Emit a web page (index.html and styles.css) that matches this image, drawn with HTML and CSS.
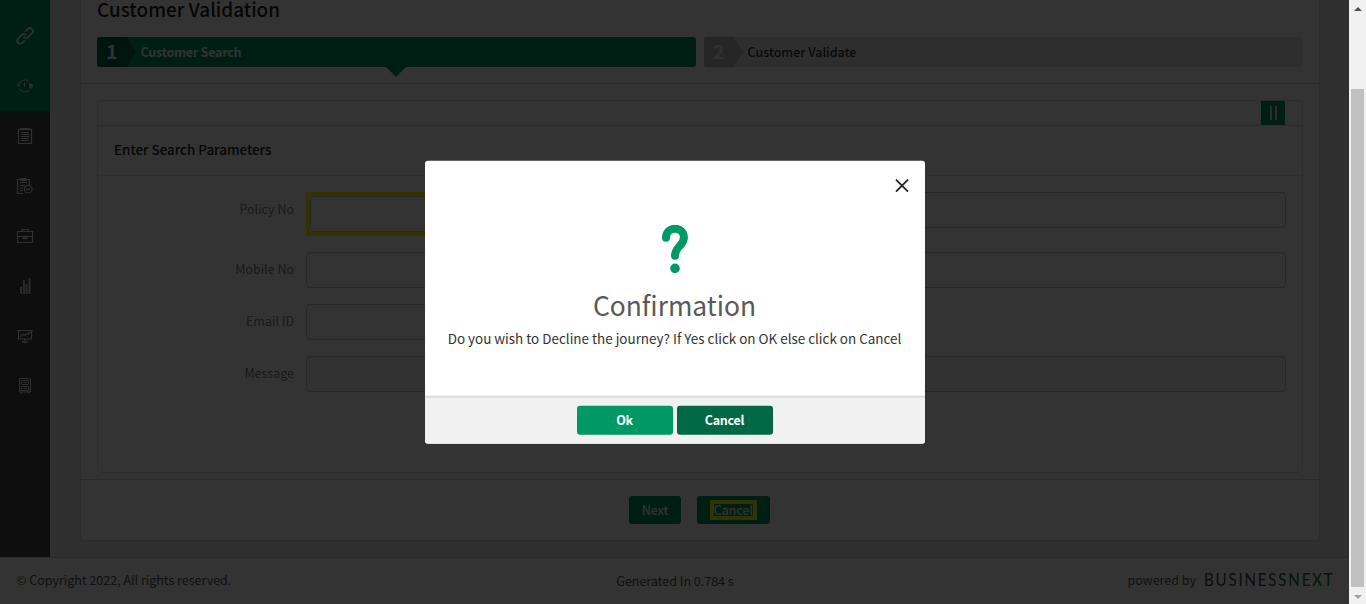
FILE: index.html
```html
<!DOCTYPE html>
<html lang="en">
<head>
<meta charset="utf-8">
<title>Customer Validation</title>
<link rel="stylesheet" href="styles.css">
</head>
<body>
<div class="window">
<div class="page">
  <div class="main">
    <nav class="sidebar">
      <div class="nav-active">
        <a class="nav-item"><svg class="icon" viewBox="0 0 16 16"><g transform="rotate(-45 8 8)" stroke-width="1.800"><path d="M4.500 11H1.200A3 3 0 0 1 1.200 5H6.500A3 3 0 0 1 9.500 8.300"/><path d="M11.500 5h3.300a3 3 0 0 1 0 6H9.500A3 3 0 0 1 6.500 7.700"/></g></svg></a>
        <a class="nav-item"><svg class="icon thin" viewBox="0 0 16 16"><path d="M1.500 7.500A6.300 6.300 0 0 1 12.500 4M2.300 10.500A6.300 6.300 0 0 0 12.500 12M7.500 4.500v4M0 6.500l1.500 1.800L3 6.500"/><path class="solid" d="M12 5.500h3v1h1v3h-1v1h-3z"/></svg></a>
      </div>
      <a class="nav-item"><svg class="icon" viewBox="0 0 16 16"><path d="M1.500 1.500h13v14h-13zM3 .5h10M4 4.500h8M4 6.500h8M4 8.500h8M4 10.500h8M4 12.500h8"/></svg></a>
      <a class="nav-item"><svg class="icon" viewBox="0 0 16 16"><path d="M6.500 15.500h-6v-14h12v5.500M4 .5h5v2H4zM3 4.500h7M3 7.500h5M3 10h3M3 12.500h3"/><circle cx="11.200" cy="11.200" r="3.800"/><path d="M9.500 10.500l1.700 1.700 1.700-2"/></svg></a>
      <a class="nav-item"><svg class="icon" viewBox="0 0 16 16"><path d="M.5 3.500h15v11H.5zM5 3V1.500h6V3M.5 8.500h15"/><path class="solid" d="M5.500 9h5v2h-5z"/></svg></a>
      <a class="nav-item"><svg class="icon" viewBox="0 0 16 16"><path class="solid" d="M3 9h2v7H3zM6 2h2v14H6zM8.700 6h1.800v10H8.700zM11.500 0h2v16h-2z"/></svg></a>
      <a class="nav-item"><svg class="icon" viewBox="0 0 16 16"><path d="M0 2.500h16M1.500 2.500v8.500h13V2.500M3 8.500l3-2 2 1 2-2 1.500.5 2-2M8 11v2M5 14.500l3-2 3 2M7 14.500h2"/></svg></a>
      <a class="nav-item"><svg class="icon thin" viewBox="0 0 16 16"><path d="M2.500.5h11v13.500h-11zM4.500 2.500h7v4h-7zM4.500 8.500h7v4h-7zM6.500 4.500h3M6.500 10.500h3M4.500 14v2M11.500 14v2"/></svg></a>
    </nav>
    <div class="content">
      <section class="card">
        <header class="card-head">
          <h1 class="title">Customer Validation</h1>
          <div class="steps">
            <div class="step step-current"><span class="step-no">1</span><span class="step-label">Customer Search</span></div>
            <div class="step"><span class="step-no">2</span><span class="step-label">Customer Validate</span></div>
          </div>
        </header>
        <div class="panel">
          <div class="toolbar"><button class="pause" aria-label="Pause"><i></i><i></i></button></div>
          <h2 class="panel-title">Enter Search Parameters</h2>
          <div class="form">
            <label class="label">Policy No</label><div class="highlight"><div class="input"></div></div><div class="input second"></div>
            <label class="label">Mobile No</label><div class="input"></div><div class="input second"></div>
            <label class="label">Email ID</label><div class="input"></div><span></span>
            <label class="label">Message</label><div class="input wide"></div>
          </div>
        </div>
        <footer class="actions">
          <button class="action next">Next</button>
          <button class="action"><span class="mark">Cancel</span></button>
        </footer>
      </section>
    </div>
  </div>
  <footer class="footer">
    <span class="copyright">© Copyright 2022, All rights reserved.</span>
    <span class="generated">Generated In 0.784 s</span>
    <span class="powered">powered by <span class="brand">BUSINESS<b>NEXT</b></span></span>
  </footer>
  <div class="overlay">
    <div class="dialog">
      <div class="dialog-body">
        <svg class="close" viewBox="0 0 14 14"><path d="M1 1l12 12M13 1L1 13"/></svg>
        <svg class="question" viewBox="0 0 26 49"><path d="M4 13C4 7.500 8 4 13 4s8.900 3.500 8.900 9c0 8-8.900 9-8.900 18"/><circle cx="13" cy="43.700" r="4.800"/></svg>
        <h3 class="dialog-title">Confirmation</h3>
        <p class="dialog-text">Do you wish to Decline the journey? If Yes click on OK else click on Cancel</p>
      </div>
      <div class="dialog-foot"><button class="btn">Ok</button><button class="btn dark">Cancel</button></div>
    </div>
  </div>
</div>
<div class="scrollbar"><span class="arrow up"></span><span class="thumb"></span><span class="arrow down"></span></div>
</div>
</body>
</html>
```
FILE: styles.css
```css
* { box-sizing: border-box; }
body { margin: 0; font-family: "Noto Sans CJK SC", "Noto Sans", sans-serif; font-size: 12.5px; color: #333; }
button { font: inherit; border: 0; padding: 0; }
.window { display: flex; width: 1366px; height: 604px; overflow: hidden; }
.page { position: relative; width: 1349px; display: flex; flex-direction: column; background: #fff; }
.main { display: flex; height: 557px; background: #ebebeb; }
.sidebar { width: 50px; background: #464646; }
.nav-active { background: #009965; padding-top: 11px; height: 111px; }
.nav-item { display: flex; height: 50px; align-items: center; justify-content: center; }
.icon { width: 16px; height: 16px; fill: none; stroke: #e8e8e8; stroke-width: 1.2; overflow: visible; }
.thin { stroke-width: 1; }
.icon .solid { fill: #d8d8d8; stroke: none; }
.content { flex: 1; padding: 0 29px 16px 30px; }
.card { height: 541px; background: #fff; border: 1px solid #d9d9d9; border-top: 0; border-radius: 0 0 3px 3px; display: flex; flex-direction: column; }
.card-head { height: 84px; padding: 0 16px; border-bottom: 1px solid #d0d0d0; }
.title { margin: 0; height: 37px; line-height: 18px; font-size: 18.9px; font-weight: 500; color: #222; }
.steps { display: grid; grid-template-columns: 1fr 1fr; gap: 8px; }
.step { position: relative; display: flex; height: 30px; line-height: 29px; background: #e5e5e5; border-radius: 3px; color: #333; font-weight: 500; }
.step-no { width: 39px; padding-left: 9px; background: #bcbcbc; clip-path: polygon(0 0, 30px 0, 39px 50%, 30px 100%, 0 100%); border-radius: 3px; color: #f5f5f5; font-size: 19.5px; line-height: 28px; font-weight: 700; }
.step-label { padding-left: 4.5px; }
.step-current { background: #009965; color: #f5f5f5; font-weight: 700; }
.step-current .step-label { letter-spacing: -.25px; }
.step-current .step-no { background: #006845; }
.step-current::after { content: ""; position: absolute; left: 289px; top: 30px; border: 10px solid transparent; border-top-color: #009965; border-bottom: 0; }
.panel { height: 373px; margin: 16px 16px 6px; border: 1px solid #d9d9d9; border-radius: 4px; }
.toolbar { height: 25px; border-bottom: 1px solid #ddd; display: flex; justify-content: flex-end; padding-right: 17px; }
.pause { width: 24px; height: 24px; background: #009965; display: flex; justify-content: center; align-items: center; gap: 3px; }
.pause i { width: 2px; height: 14px; background: #ddd; }
.panel-title { margin: 0; padding-left: 16px; height: 50px; line-height: 47px; font-size: 13.4px; font-weight: 500; color: #222; border-bottom: 1px solid #e4e4e4; }
.form { display: grid; grid-template-columns: 196px 386px 582px; grid-template-rows: 60px 52px 52px 52px; column-gap: 12px; padding: 16px 16px 0 0; align-items: start; }
.label { text-align: right; line-height: 34px; color: #808080; }
.input { height: 36px; border: 1px solid #c0c0c0; border-radius: 4px; background: #fff; }
.highlight { border: 4px solid #ff0; height: 44px; }
.wide { grid-column: 2 / 4; background: #f9f9f9; }
.actions { border-top: 1px solid #d0d0d0; flex: 1; display: flex; justify-content: center; padding: 16px 2px 0 0; gap: 16px; }
.action { height: 28px; width: 73px; background: #009965; border-radius: 3px; color: #f5f5f5; font-weight: 500; line-height: 28px; }
.next { width: 52px; letter-spacing: -.2px; padding-left: 1px; }
.mark { display: inline-block; width: 47px; border: 4px solid #ff0; line-height: 12px; height: 20px; letter-spacing: -.1px; white-space: nowrap; }
.footer { height: 47px; border-top: 1px solid #ccc; display: grid; grid-template-columns: 1fr auto 1fr; align-items: center; padding: 0 15px 3px 16px; color: #555; }
.generated { padding-top: 2px; }
.powered { display: flex; justify-content: flex-end; align-items: center; gap: 8px; }
.brand { width: 130px; font-family: Lato, sans-serif; font-size: 17px; line-height: 22px; padding-top: 1px; letter-spacing: 2px; color: #444; transform: scaleX(.89); transform-origin: left; white-space: nowrap; }
.brand b { font-weight: 400; color: #286c2c; }
.overlay { position: absolute; inset: 0; background: rgba(0,0,0,.8); display: flex; justify-content: center; align-items: center; }
.dialog { width: 500px; height: 283px; border-radius: 3px; background: #fff; overflow: hidden; transform: translateY(-.3px); }
.dialog-body { position: relative; height: 235px; padding-top: 64px; display: flex; flex-direction: column; align-items: center; }
.close { position: absolute; right: 16px; top: 18px; width: 14px; height: 14px; stroke: #222; stroke-width: 1.8; fill: none; }
.question { width: 26px; height: 49px; fill: none; stroke: #009965; stroke-width: 8; stroke-linecap: round; }
.question circle { fill: #009965; stroke: none; }
.dialog-title { margin: 12px 0 0; height: 40px; line-height: 37px; font-size: 26.4px; font-weight: 400; color: #58595b; }
.dialog-text { margin: 1px 0 0; line-height: 22px; font-size: 13.45px; color: #333; white-space: nowrap; }
.dialog-foot { height: 48px; background: #f1f1f1; border-top: 2px solid #dcdcdc; display: flex; justify-content: center; gap: 4px; padding-top: 8px; }
.btn { width: 96px; height: 29px; border-radius: 3px; background: #009965; color: #fff; font-weight: 700; line-height: 27px; padding-bottom: 2px; letter-spacing: -.25px; }
.dark { background: #006845; }
.scrollbar { width: 17px; background: #f1f1f1; display: flex; flex-direction: column; align-items: center; }
.thumb { width: 13px; height: 498px; margin: 78px 0 8px; background: #c1c1c1; }
.arrow { border: 4px solid transparent; }
.up { margin-top: 3px; border-bottom-color: #505050; }
.down { margin-top: 0; border-top-color: #a3a3a3; }
```
